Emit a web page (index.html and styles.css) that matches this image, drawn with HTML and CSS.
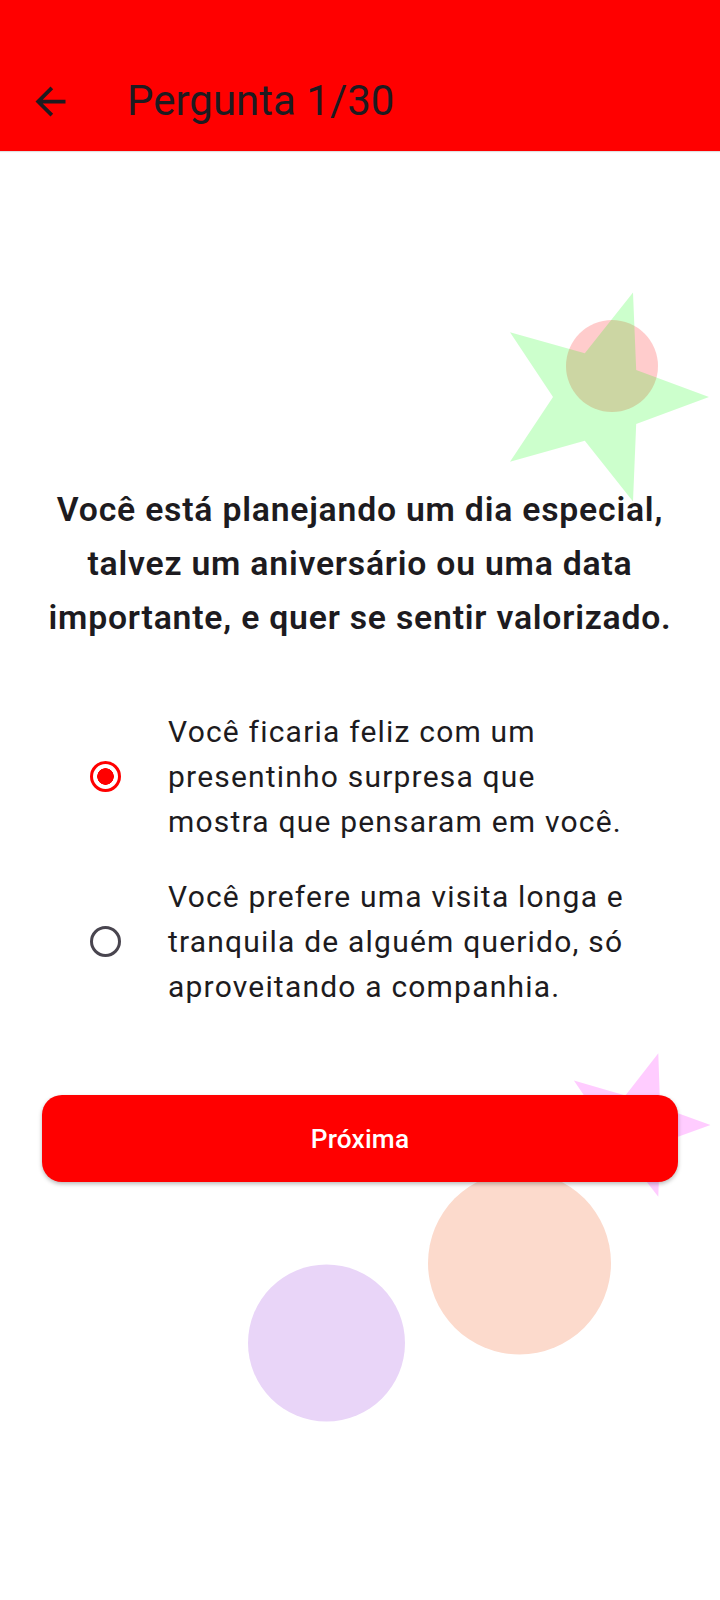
FILE: index.html
```html
<!DOCTYPE html>
<html lang="pt-BR">
<head>
<meta charset="utf-8">
<title>Pergunta 1/30</title>
<link rel="stylesheet" href="styles.css">
</head>
<body>
<svg class="decor" viewBox="0 0 720 1600" width="720" height="1600" aria-hidden="true">
  <circle class="dot-red" cx="612" cy="366" r="46"/>
  <polygon class="star-green" points="709,397 636.2,424 633,501.6 584.8,440.7 510,461.7 553,397 510,332.3 584.8,353.3 633,292.4 636.2,370"/>
  <polygon class="star-pink" points="710.5,1125 660.1,1143.2 658.3,1196.8 625.4,1154.5 573.9,1169.4 604,1125 573.9,1080.6 625.4,1095.5 658.3,1053.2 660.1,1106.8"/>
  <circle class="dot-peach" cx="519.5" cy="1263" r="91.5"/>
  <circle class="dot-lilac" cx="326.5" cy="1343" r="78.5"/>
</svg>
<header class="appbar">
  <div class="toolbar">
    <button class="back" aria-label="Voltar">
      <svg viewBox="0 0 24 24" width="45" height="45"><path d="M20 11H7.83l5.59-5.59L12 4l-8 8 8 8 1.41-1.41L7.83 13H20v-2z"/></svg>
    </button>
    <h1 class="title">Pergunta 1/30</h1>
  </div>
</header>
<main class="content">
  <p class="question">Você está planejando um dia especial, talvez um aniversário ou uma data importante, e quer se sentir valorizado.</p>
  <div class="options" role="radiogroup">
    <label class="option">
      <span class="radio radio-on"></span>
      <span class="option-text">Você ficaria feliz com um presentinho surpresa que mostra que pensaram em você.</span>
    </label>
    <label class="option">
      <span class="radio"></span>
      <span class="option-text">Você prefere uma visita longa e tranquila de alguém querido, só aproveitando a companhia.</span>
    </label>
  </div>
  <button class="next">Próxima</button>
</main>
</body>
</html>
```
FILE: styles.css
```css
html, body {
  margin: 0;
  padding: 0;
  background: #ffffff;
}
body {
  position: relative;
  width: 720px;
  min-height: 1600px;
  font-family: Roboto, "Noto Sans", "Liberation Sans", sans-serif;
  color: #1d1b20;
  overflow: hidden;
}
.decor {
  position: absolute;
  top: 0;
  left: 0;
  z-index: 0;
  pointer-events: none;
}
.dot-red { fill: rgba(255, 0, 0, 0.2); }
.star-green { fill: rgba(0, 255, 0, 0.2); }
.star-pink { fill: rgba(255, 0, 255, 0.2); }
.dot-peach { fill: #fcdacc; }
.dot-lilac { fill: #e9d5f8; }

.appbar {
  position: relative;
  z-index: 1;
  background: #ff0000;
  height: 151px;
  padding-top: 45px;
  box-sizing: border-box;
  box-shadow: 0 1px 1px rgba(0, 0, 0, 0.12);
}
.toolbar {
  display: flex;
  align-items: center;
  height: 106px;
  padding-top: 6px;
  box-sizing: border-box;
}
.back {
  flex: none;
  width: 45px;
  height: 45px;
  margin-left: 28px;
  padding: 0;
  border: 0;
  background: none;
  fill: #1d1b20;
  display: flex;
}
.title {
  margin: 0 0 0 54px;
  font-size: 42px;
  line-height: 42px;
  font-weight: 400;
  color: #1d1b20;
}

.content {
  position: relative;
  z-index: 1;
  padding: 0 30px;
}
.question {
  margin: 332px 0 0;
  font-size: 33.75px;
  line-height: 54px;
  font-weight: 600;
  letter-spacing: 0.78px;
  text-align: center;
  color: #1d1b20;
}
.options {
  margin-top: 64px;
  display: flex;
  flex-direction: column;
  gap: 30px;
}
.option {
  display: flex;
  align-items: center;
  gap: 47px;
  padding-left: 60px;
}
.radio {
  flex: none;
  width: 31px;
  height: 31px;
  box-sizing: border-box;
  border: 3.5px solid #49454f;
  border-radius: 50%;
}
.radio-on {
  border-color: #ff0000;
  background: radial-gradient(circle, #ff0000 0 8px, transparent 8.6px);
}
.option-text {
  width: 466px;
  font-size: 30px;
  line-height: 45px;
  letter-spacing: 1.2px;
  color: #1d1b20;
}
.next {
  display: block;
  width: calc(100% - 24px);
  height: 87px;
  margin: 86px auto 0;
  border: 0;
  border-radius: 20px;
  background: #ff0000;
  color: #ffffff;
  font-family: inherit;
  font-size: 26.25px;
  font-weight: 500;
  letter-spacing: 0.19px;
  box-shadow: 0 2px 4px rgba(0, 0, 0, 0.28);
}
```
